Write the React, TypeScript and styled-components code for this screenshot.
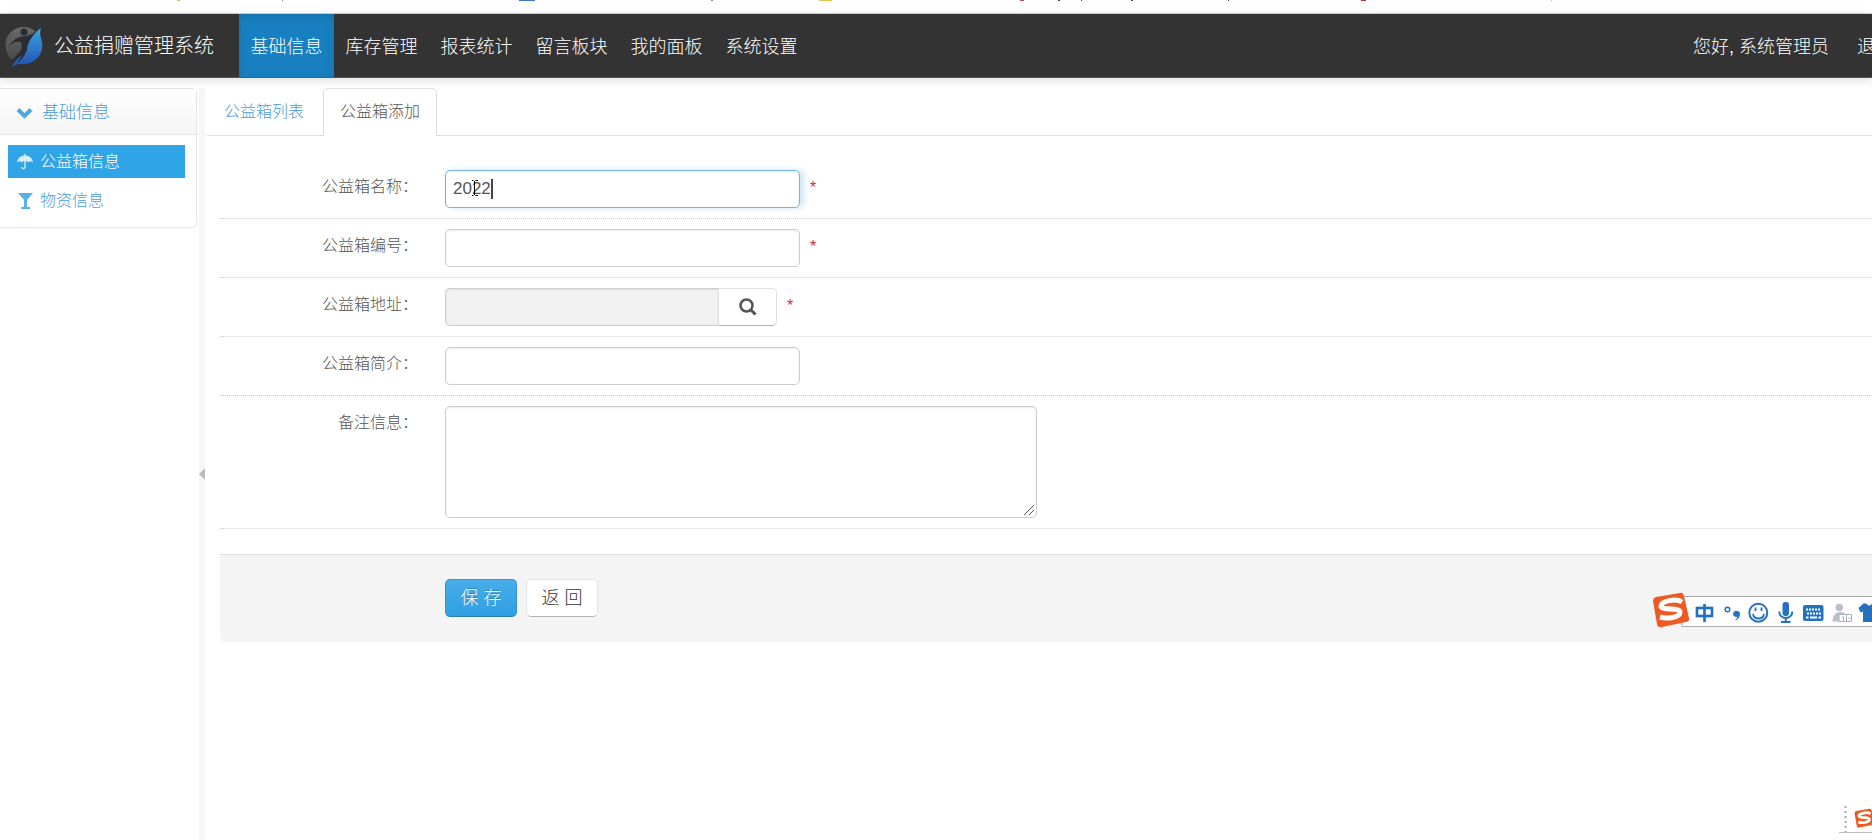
import React from 'react';
import styled, { createGlobalStyle, css } from 'styled-components';

const Global = createGlobalStyle`
  * { box-sizing: border-box; }
  body {
    margin: 0;
    background: #fff;
    color: #555;
    font-family: "Liberation Sans", "Noto Sans CJK SC", sans-serif;
    font-size: 16px;
    font-weight: 300;
    line-height: 24px;
    overflow: hidden;
  }
  a { color: inherit; text-decoration: none; }
  button, input, textarea { font: inherit; color: inherit; margin: 0; }
`;

const Page = styled.div`
  min-height: 100vh;
  display: flex;
  flex-direction: column;
`;

const BrowserEdge = styled.div`
  height: 14px;
  border-bottom: 1px solid #d4d4d4;
  overflow: hidden;
  svg { display: block; }
`;

const TopBar = styled.header`
  position: relative;
  height: 64px;
  display: flex;
  align-items: stretch;
  flex: none;
  background: #333;
  border-bottom: 1px solid #1a6ba3;
  box-shadow: 0 1px 10px rgba(0, 0, 0, 0.1);
  color: #fff;
  overflow: hidden;
`;

const Brand = styled.a`
  width: 239px;
  padding-left: 4px;
  display: flex;
  align-items: center;
  gap: 10px;
  font-size: 20px;
  white-space: nowrap;
  svg { flex: none; }
`;

const MainNav = styled.nav`
  display: flex;
`;

const NavLink = styled.a<{ $active?: boolean }>`
  width: 95px;
  padding-top: 2px;
  display: flex;
  align-items: center;
  justify-content: center;
  font-size: 18px;
  white-space: nowrap;
  ${p => p.$active && css`
    background: #1880c0;
    box-shadow: inset 0 3px 8px rgba(0, 0, 0, 0.12);
  `}
`;

const UserNav = styled.nav`
  margin-left: auto;
  margin-right: -21px;
  padding-top: 2px;
  display: flex;
  align-items: center;
  gap: 28px;
  font-size: 18px;
  white-space: nowrap;
`;

const Body = styled.div`
  flex: 1;
  display: flex;
  padding-top: 10px;
  background: linear-gradient(#f7f7f7, #fff 12px);
`;

const Sidebar = styled.aside`
  width: 197px;
  flex: none;
`;

const MenuPanel = styled.section`
  border: 1px solid #e5e5e5;
  border-left: 0;
  border-radius: 0 5px 5px 0;
  background: #fff;
`;

const MenuHeading = styled.h2`
  margin: 0;
  height: 46px;
  padding: 2px 0 0 16px;
  display: flex;
  align-items: center;
  gap: 9px;
  border-bottom: 1px solid #e5e5e5;
  background: linear-gradient(#fff, #f5f5f5);
  color: #4a9bd8;
  font-size: 17px;
  font-weight: inherit;
`;

const Menu = styled.ul`
  list-style: none;
  margin: 0;
  padding: 10px 11px 10px 8px;
  display: flex;
  flex-direction: column;
  gap: 6px;
`;

const MenuLink = styled.a<{ $active?: boolean }>`
  height: 33px;
  padding-left: 9px;
  display: flex;
  align-items: center;
  gap: 7px;
  color: ${p => (p.$active ? '#fff' : '#4a9bd8')};
  background: ${p => (p.$active ? '#2fa4e7' : 'transparent')};
`;

const Divider = styled.div`
  width: 6px;
  margin-left: 2px;
  padding-top: 20px;
  flex: none;
  background: #f6f6f6;
  display: flex;
  flex-direction: column;
  align-items: center;
  justify-content: center;
`;

const Content = styled.main`
  flex: 1;
  min-width: 0;
  padding-left: 2px;
`;

const Tabs = styled.nav`
  display: flex;
  gap: 2px;
  border-bottom: 1px solid #ddd;
`;

const Tab = styled.a<{ $active?: boolean }>`
  height: 48px;
  margin-bottom: -1px;
  padding: 0 16px;
  display: flex;
  align-items: center;
  border: 1px solid transparent;
  color: #4a9bd8;
  ${p => p.$active && css`
    border-color: #ddd #ddd #fff;
    border-radius: 5px 5px 0 0;
    background: #fff;
    color: #555;
  `}
`;

const Form = styled.form`
  margin: 24px 0 0 13px;
`;

const Row = styled.div`
  display: flex;
  padding: 10px 0;
  border-bottom: 1px dotted #d0d0d0;
`;

const Label = styled.label`
  width: 198px;
  margin-right: 27px;
  padding-top: 5px;
  flex: none;
  text-align: right;
  white-space: nowrap;
`;

const field = css`
  border: 1px solid #ccc;
  border-radius: 5px;
  background: #fff;
  box-shadow: inset 0 1px 2px rgba(0, 0, 0, 0.08);
  outline: 0;
`;

const TextInput = styled.input<{ $focused?: boolean }>`
  ${field}
  width: 355px;
  height: 38px;
  padding: 0 7px;
  font-size: 17px;
  ${p => p.$focused && css`
    border-color: #7ab2de;
    box-shadow: inset 0 1px 2px rgba(0, 0, 0, 0.06), 4px 0 6px rgba(82, 168, 236, 0.3);
  `}
`;

const TextArea = styled.textarea`
  ${field}
  display: block;
  width: 592px;
  height: 112px;
  padding: 6px 8px;
  resize: none;
`;

const Entry = styled.div`
  position: relative;
  display: flex;
`;

const Caret = styled.svg`
  position: absolute;
  left: 27px;
  top: 8px;
`;

const Grip = styled.svg`
  position: absolute;
  right: 2px;
  bottom: 2px;
  pointer-events: none;
`;

const LookupInput = styled(TextInput)`
  width: 273px;
  border-right: 0;
  border-radius: 5px 0 0 5px;
  background: #f1f1f1;
`;

const LookupButton = styled.button`
  width: 59px;
  height: 38px;
  padding: 0;
  display: grid;
  place-items: center;
  border: 1px solid #e0e0e0;
  border-bottom-color: #b3b3b3;
  border-radius: 0 5px 5px 0;
  background: #fff;
`;

const Required = styled.span`
  margin-left: 10px;
  padding-top: 6px;
  color: #e0283a;
  font-size: 16px;
`;

const Actions = styled.div`
  height: 88px;
  margin-top: 25px;
  padding: 24px 0 0 225px;
  display: flex;
  gap: 9px;
  border-top: 1px solid #e2e2e2;
  border-radius: 0 0 0 5px;
  background: #f4f4f4;
`;

const Button = styled.button<{ $primary?: boolean }>`
  height: 38px;
  width: 72px;
  padding: 0;
  border: 1px solid #e3e3e3;
  border-bottom-color: #b3b3b3;
  border-radius: 5px;
  background: #fff;
  color: #333;
  font-size: 18px;
  ${p => p.$primary && css`
    border-color: #2f96d2;
    border-bottom-color: #2a7cad;
    background: linear-gradient(#48adea, #2fa0e2);
    color: #fff;
    text-shadow: 0 -1px 0 rgba(0, 0, 0, 0.25);
  `}
`;

const ImeBar = styled.div`
  position: fixed;
  right: 0;
  top: 592px;
  svg { display: block; }
`;

const ImeTray = styled.div`
  position: fixed;
  right: 0;
  bottom: 0;
  svg { display: block; }
`;

const navItems = ['基础信息', '库存管理', '报表统计', '留言板块', '我的面板', '系统设置'];

const edgeMarks: [number, number, string][] = [
  [177, 3, '#c9c33a'], [282, 1, '#888'], [519, 16, '#3b74c4'], [711, 2, '#888'],
  [819, 13, '#e8c04a'], [1020, 4, '#c04a70'], [1058, 2, '#444'], [1081, 1, '#444'],
  [1131, 2, '#444'], [1228, 1, '#444'], [1361, 5, '#c23030'], [1551, 1, '#bbb'],
];

const LogoMark = () => (
  <svg width="40" height="44" viewBox="0 0 40 44" aria-hidden="true">
    <defs>
      <linearGradient id="stone" x1="0" y1="0" x2="0" y2="1">
        <stop offset="0" stopColor="#6a6a6a" /><stop offset="1" stopColor="#484848" />
      </linearGradient>
      <linearGradient id="sea" x1="0" y1="0" x2="0" y2="1">
        <stop offset="0" stopColor="#3aa6e4" /><stop offset="1" stopColor="#2450ac" />
      </linearGradient>
    </defs>
    <path d="M31 7C24 1 13 2 7 8C-1 15 0 29 8 36L20 24Z" fill="url(#stone)" />
    <path d="M37 4C31 8 26 12 23 18L21 27C17 33 11 35 8 43C13 39 17 40 21 40C33 39 40 28 38 18C37 13 35 10 37 4Z" fill="url(#sea)" />
    <path d="M35 5C31 9 26 11 22 12C17 12 10 14 5 22C9 18 13 17 17 18C18 22 18 26 15 29C12 31 10 34 8 39C11 35 15 34 18 31C17 33 16 35 13 39C18 36 21 31 23 26C23 19 28 12 35 5Z" fill="#2a2d31" />
    <circle cx="20" cy="8" r="3.500" fill="#2a2d31" />
  </svg>
);

const SogouMark = () => (
  <>
    <path d="M4 5L28 1Q31 0 32 4L37 26Q38 29 34 30L10 35Q6 36 5 32L1 9Q1 6 4 5Z" fill="#ee5a24" />
    <path d="M30 10C24 6 9 9 9 14C9 19 28 15 28 20C28 26 15 27 8 25" fill="none" stroke="#fff" strokeWidth="5" />
  </>
);

export default function App() {
  return (
    <>
      <Global />
      <Page>
        <BrowserEdge aria-hidden="true">
          <svg width="1872" height="13">
            {edgeMarks.map(([x, w, c]) => <rect key={x} x={x} y="0" width={w} height="1" fill={c} />)}
          </svg>
        </BrowserEdge>
        <TopBar>
          <Brand href="#"><LogoMark />公益捐赠管理系统</Brand>
          <MainNav>
            {navItems.map((t, i) => <NavLink key={t} href="#" $active={i === 0}>{t}</NavLink>)}
          </MainNav>
          <UserNav><a href="#">您好, 系统管理员</a><a href="#">退出</a></UserNav>
        </TopBar>
        <Body>
          <Sidebar>
            <MenuPanel>
              <MenuHeading>
                <svg width="17" height="12" viewBox="0 0 17 12"><path d="M2 2.500L8.500 9L15 2.500" fill="none" stroke="#4aa9e4" strokeWidth="4" /></svg>
                基础信息
              </MenuHeading>
              <Menu>
                <li>
                  <MenuLink href="#" $active>
                    <svg width="16" height="16" viewBox="0 0 16 16" fill="#d8effc">
                      <path d="M7.300 0H8.700V1.500C12.500 1.800 15.500 4.500 16 8.500C14.500 6.800 12.500 6.800 11.500 8.500C10.500 7.200 9.500 7 8.700 7.200V13C8.700 16 4.300 16 4.300 13H5.600C5.600 14.300 7.300 14.300 7.300 13V7.200C6.500 7 5.500 7.200 4.500 8.500C3.500 6.800 1.500 6.800 0 8.500C.5 4.500 3.500 1.800 7.300 1.500Z" />
                    </svg>
                    公益箱信息
                  </MenuLink>
                </li>
                <li>
                  <MenuLink href="#">
                    <svg width="16" height="16" viewBox="0 0 16 16" fill="#55b2e8"><path d="M1 0H16L10 7V14H13V16H4V14H7V7Z" /></svg>
                    物资信息
                  </MenuLink>
                </li>
              </Menu>
            </MenuPanel>
          </Sidebar>
          <Divider>
            <svg width="6" height="12" viewBox="0 0 6 12"><path d="M6 0V12L0 6Z" fill="#bbb" /></svg>
          </Divider>
          <Content>
            <Tabs>
              <Tab href="#">公益箱列表</Tab>
              <Tab href="#" $active>公益箱添加</Tab>
            </Tabs>
            <Form onSubmit={e => e.preventDefault()}>
              <Row>
                <Label htmlFor="name">公益箱名称：</Label>
                <Entry>
                  <TextInput id="name" defaultValue="2022" $focused />
                  <Caret width="24" height="22" viewBox="0 0 24 22" aria-hidden="true">
                    <path d="M-1 2.500H1.500M3.500 2.500H6M-1 17.500H1.500M3.500 17.500H6M2.500 3V17" stroke="#000" />
                    <path d="M20 1V21" stroke="#444" strokeWidth="2" />
                  </Caret>
                </Entry>
                <Required>*</Required>
              </Row>
              <Row>
                <Label htmlFor="code">公益箱编号：</Label>
                <TextInput id="code" />
                <Required>*</Required>
              </Row>
              <Row>
                <Label htmlFor="address">公益箱地址：</Label>
                <LookupInput id="address" readOnly />
                <LookupButton type="button" aria-label="选择地址">
                  <svg width="18" height="18" viewBox="0 0 18 18" fill="none" stroke="#555"><circle cx="7.500" cy="7.500" r="6" strokeWidth="2.500" /><path d="M12 12L16.500 16.500" strokeWidth="3" /></svg>
                </LookupButton>
                <Required>*</Required>
              </Row>
              <Row>
                <Label htmlFor="intro">公益箱简介：</Label>
                <TextInput id="intro" />
              </Row>
              <Row>
                <Label htmlFor="remark">备注信息：</Label>
                <Entry>
                  <TextArea id="remark" />
                  <Grip width="12" height="12" viewBox="0 0 12 12" aria-hidden="true">
                    <path d="M1 11L11 1M6 11L11 6" stroke="#555" />
                  </Grip>
                </Entry>
              </Row>
              <Actions>
                <Button type="submit" $primary>保 存</Button>
                <Button type="button">返 回</Button>
              </Actions>
            </Form>
          </Content>
        </Body>
        <ImeBar aria-hidden="true">
          <svg width="220" height="38" viewBox="0 0 220 38">
            <path d="M30 4.500H221V34.500H30Z" fill="#fff" stroke="#a8a8a8" />
            <SogouMark />
            <g fill="none" stroke="#2472bf">
              <rect x="45" y="16" width="15" height="8" strokeWidth="2.700" />
              <path d="M52.500 12V30" strokeWidth="2.700" />
              <circle cx="75.500" cy="17.500" r="2.300" strokeWidth="1.500" />
              <circle cx="106.300" cy="20.700" r="9" strokeWidth="2" />
              <path d="M101 22C102 28 111 28 112 22M103.500 15.500V19M109.500 15.500V19" strokeWidth="1.800" />
              <path d="M127.300 19.500C127.300 28 140.300 28 140.300 19.500M133.800 26V30M129 30H138.500" strokeWidth="2" />
            </g>
            <g fill="#2472bf">
              <path d="M85 19A3 3 0 1 0 85.500 24.500C85 26.500 84 27.500 82.500 28.500C86 28 88 25 88 22Q88 19 85 19Z" />
              <rect x="130.500" y="10" width="6.500" height="14" rx="3" />
              <rect x="151" y="13" width="20.500" height="16" rx="2" />
              <path d="M206.500 16L211.500 11.500H214.500C215.500 14 219 14 220 11.500V30H211V19.500L208.500 20.500Z" />
            </g>
            <g fill="none" stroke="#fff" strokeWidth="2">
              <path d="M154 17.500H169M155 21.500H169" strokeDasharray="2 1" />
              <path d="M154 25.500H156.500M158 25.500H165M166.500 25.500H169" />
            </g>
            <circle cx="187.300" cy="15.500" r="3.700" fill="#b9bfcc" />
            <path d="M180.500 29.500C180.500 23 184 20 188 20C191 20 193 21 194 23V29.500Z" fill="#b9bfcc" />
            <path d="M187 22.500H199.500V29.500H187ZM190 25H192M191.500 25V29M194.500 22.500V29M196.500 26H199" fill="#fff" stroke="#a9b0c0" />
          </svg>
        </ImeBar>
        <ImeTray aria-hidden="true">
          <svg width="34" height="34" viewBox="0 0 34 34">
            <path d="M7.500 0V26" stroke="#aaa" strokeWidth="2" strokeDasharray="2 3" />
            <path d="M1 26.500H34" stroke="#bbb" />
            <svg x="16" y="2" width="21" height="21" viewBox="0 0 38 37"><SogouMark /></svg>
          </svg>
        </ImeTray>
      </Page>
    </>
  );
}
